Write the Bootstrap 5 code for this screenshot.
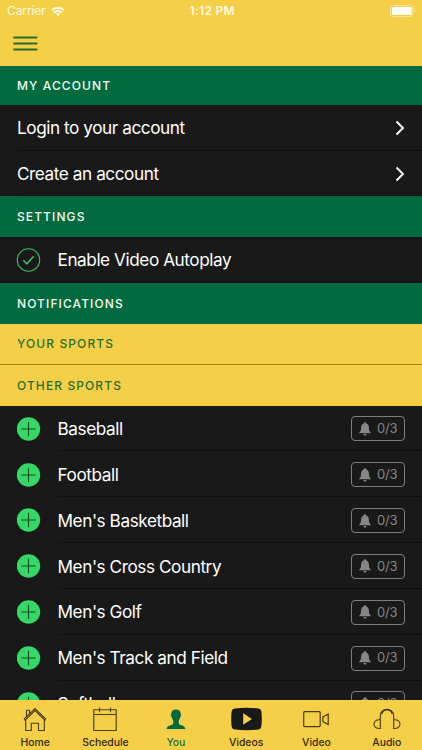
<!DOCTYPE html>
<html lang="en">
<head>
<meta charset="utf-8">
<meta name="viewport" content="width=device-width, initial-scale=1">
<title>You</title>
<link href="https://cdn.jsdelivr.net/npm/bootstrap@5.3.0/dist/css/bootstrap.min.css" rel="stylesheet">
<style>
:root{--gold:#f5cf48;--green:#026a3e;--ink:#191919}
body{font-family:Inter,"Liberation Sans",sans-serif;background:var(--ink);color:#fff}
svg{display:block;flex:none;overflow:visible}
.screen{height:750px}
.top{height:65.5px;background:var(--gold)}
.status{height:22px;font-size:12px;line-height:22px;padding:0 6px 0 7px;color:#fff9e2}
.status .side{flex:1 1 0}
.carrier{letter-spacing:-.1px}
.clock{font-weight:600;letter-spacing:.3px;margin-left:1.5px}
.wifi{margin-left:5.500px}
.menu-btn{padding:14px 0 0 13px}
.sect{background:var(--green);font-size:12px;font-weight:500;letter-spacing:1.1px;padding:1px 17px 0;color:#effaf3}
.sect-gold{background:var(--gold);color:#27702c}
.h-a{height:39.5px}.h-b{height:40.5px}.h-c{height:41px}
.line-b{border-bottom:1px solid #9b8430}
.entry{font-size:17.2px;letter-spacing:-.44px;padding-left:17px}
.entry .body-part{border-bottom:1px solid #101010;padding:2px 17px 0 0}
.h-row{height:45.5px}.h-set{height:46px}.h-sport{height:45.85px}
.entry .mark-col{width:40.5px;padding-top:.6px}
.bell{width:54.5px;height:25px;border:1px solid #7d7d7d;border-radius:4px;color:#868686;font-size:13px;letter-spacing:-.2px;padding-left:7px;gap:6.5px}
.tabs{height:50px;background:var(--gold);z-index:2}
.tab{font-size:10.4px;font-weight:500;line-height:13px;letter-spacing:0;color:#302b13;padding-top:7px}
.tab svg{margin-bottom:4px}
.tab-on{color:#167239}
.list-area{min-height:0}
</style>
<script src="https://cdn.jsdelivr.net/npm/bootstrap@5.3.0/dist/js/bootstrap.bundle.min.js"></script>
</head>
<body>
<svg width="0" height="0" class="position-absolute" aria-hidden="true">
<symbol id="chev" viewBox="0 0 10 16"><path d="M1.500 1.500 8 8l-6.500 6.500" fill="none" stroke="#fff" stroke-width="1.900"/></symbol>
<symbol id="plus" viewBox="0 0 24 24"><circle cx="11.500" cy="12" r="11.700" fill="#35d866"/><path d="M11.500 4.800v14.400M4.300 12h14.400" stroke="#124d25" stroke-width="1.100"/></symbol>
<symbol id="bell" viewBox="0 0 12 14"><path d="M6 .2c.8 0 1.200.5 1.200 1.200C9 2 9.900 3.500 9.900 5.500c0 3 .7 4.100 1.900 5.200v.6H.2v-.6C1.400 9.600 2.100 8.500 2.100 5.500 2.100 3.500 3 2 4.800 1.400 4.800.7 5.200.2 6 .2ZM4.500 12h3c0 2.100-3 2.100-3 0Z" fill="currentColor"/></symbol>
</svg>
<div class="screen d-flex flex-column overflow-hidden">
  <header class="top flex-shrink-0">
    <div class="status d-flex align-items-center">
      <div class="side d-flex align-items-center"><span class="carrier">Carrier</span>
        <svg width="14" height="11" viewBox="0 0 15 11" class="wifi"><g fill="none" stroke="#fffdf2" stroke-width="2"><path d="M1 4.100a9.300 9.300 0 0 1 13 0M3.400 6.600a5.800 5.800 0 0 1 8.200 0"/></g><path d="M5.200 8.200a3.300 3.300 0 0 1 4.600 0L7.500 10.600Z" fill="#fffdf2"/></svg></div>
      <span class="clock">1:12 PM</span>
      <div class="side d-flex justify-content-end">
        <svg width="26" height="12" viewBox="0 0 26 12"><rect x=".5" y=".5" width="22.500" height="11" rx="3" fill="none" stroke="#fae6a0"/><rect x="2" y="2" width="19.700" height="8" rx="1.600" fill="#fff"/><path d="M24.300 4v4c1.700-.6 1.700-3.400 0-4Z" fill="#fae6a0"/></svg>
      </div>
    </div>
    <div class="menu-btn"><svg width="25" height="16" viewBox="0 0 25 16"><path d="M.3 1.500h24M.3 7.500h24M.3 13.500h24" stroke="#276e2d" stroke-width="1.900"/></svg></div>
  </header>
  <main class="list-area flex-grow-1 overflow-hidden d-flex flex-column">
    <div class="sect h-a d-flex align-items-center flex-shrink-0">MY ACCOUNT</div>
    <div class="entry h-row d-flex flex-shrink-0"><div class="body-part flex-grow-1 d-flex align-items-center justify-content-between"><span>Login to your account</span><svg width="10" height="16"><use href="#chev"/></svg></div></div>
    <div class="entry h-row d-flex flex-shrink-0"><div class="body-part flex-grow-1 d-flex align-items-center justify-content-between"><span>Create an account</span><svg width="10" height="16"><use href="#chev"/></svg></div></div>
    <div class="sect h-b d-flex align-items-center flex-shrink-0">SETTINGS</div>
    <div class="entry h-set d-flex align-items-center flex-shrink-0"><div class="mark-col"><svg width="24" height="24" viewBox="0 0 24 24" fill="none" stroke="#35c85f"><circle cx="11.500" cy="12" r="11.200" stroke-width="1.100"/><path d="m6.300 12.200 3.500 3.600 6.900-7.500" stroke-width="1.500"/></svg></div><span>Enable Video Autoplay</span></div>
    <div class="sect h-c d-flex align-items-center flex-shrink-0">NOTIFICATIONS</div>
    <div class="sect sect-gold h-c line-b d-flex align-items-center flex-shrink-0">YOUR SPORTS</div>
    <div class="sect sect-gold h-c d-flex align-items-center flex-shrink-0">OTHER SPORTS</div>
    <div class="entry h-sport d-flex flex-shrink-0"><div class="mark-col d-flex align-items-center"><svg width="24" height="24"><use href="#plus"/></svg></div><div class="body-part flex-grow-1 d-flex align-items-center justify-content-between"><span>Baseball</span><div class="bell d-flex align-items-center"><svg width="12" height="14"><use href="#bell"/></svg><span>0/3</span></div></div></div>
    <div class="entry h-sport d-flex flex-shrink-0"><div class="mark-col d-flex align-items-center"><svg width="24" height="24"><use href="#plus"/></svg></div><div class="body-part flex-grow-1 d-flex align-items-center justify-content-between"><span>Football</span><div class="bell d-flex align-items-center"><svg width="12" height="14"><use href="#bell"/></svg><span>0/3</span></div></div></div>
    <div class="entry h-sport d-flex flex-shrink-0"><div class="mark-col d-flex align-items-center"><svg width="24" height="24"><use href="#plus"/></svg></div><div class="body-part flex-grow-1 d-flex align-items-center justify-content-between"><span>Men's Basketball</span><div class="bell d-flex align-items-center"><svg width="12" height="14"><use href="#bell"/></svg><span>0/3</span></div></div></div>
    <div class="entry h-sport d-flex flex-shrink-0"><div class="mark-col d-flex align-items-center"><svg width="24" height="24"><use href="#plus"/></svg></div><div class="body-part flex-grow-1 d-flex align-items-center justify-content-between"><span>Men's Cross Country</span><div class="bell d-flex align-items-center"><svg width="12" height="14"><use href="#bell"/></svg><span>0/3</span></div></div></div>
    <div class="entry h-sport d-flex flex-shrink-0"><div class="mark-col d-flex align-items-center"><svg width="24" height="24"><use href="#plus"/></svg></div><div class="body-part flex-grow-1 d-flex align-items-center justify-content-between"><span>Men's Golf</span><div class="bell d-flex align-items-center"><svg width="12" height="14"><use href="#bell"/></svg><span>0/3</span></div></div></div>
    <div class="entry h-sport d-flex flex-shrink-0"><div class="mark-col d-flex align-items-center"><svg width="24" height="24"><use href="#plus"/></svg></div><div class="body-part flex-grow-1 d-flex align-items-center justify-content-between"><span>Men's Track and Field</span><div class="bell d-flex align-items-center"><svg width="12" height="14"><use href="#bell"/></svg><span>0/3</span></div></div></div>
    <div class="entry h-sport d-flex flex-shrink-0"><div class="mark-col d-flex align-items-center"><svg width="24" height="24"><use href="#plus"/></svg></div><div class="body-part flex-grow-1 d-flex align-items-center justify-content-between"><span>Softball</span><div class="bell d-flex align-items-center"><svg width="12" height="14"><use href="#bell"/></svg><span>0/3</span></div></div></div>
  </main>
  <nav class="tabs row row-cols-6 g-0 flex-shrink-0">
    <div class="col tab d-flex flex-column align-items-center"><svg width="24" height="25" viewBox="0 0 24 25" fill="none" stroke="#463c17" stroke-width="1.100"><path d="M1 12.200 12 1.500l11 10.700M1 12.200l1.100 1L12 3.600l9.900 9.600 1.100-1M3.500 9.500V3.200h3v3.500M2.700 12.800v10.700h5.600v-7.300h7.200v7.300h5.800V12.800"/></svg>Home</div>
    <div class="col tab d-flex flex-column align-items-center"><svg width="24" height="25" viewBox="0 0 24 25" fill="none" stroke="#463c17" stroke-width="1.100"><path d="M.8 2.700h22.400v20.800H.8zM.8 7.500h22.400M6.500.5v4.800M17.500.5v4.800"/></svg>Schedule</div>
    <div class="col tab tab-on d-flex flex-column align-items-center"><svg width="20" height="25" viewBox="0 0 20 25"><path d="M10 2.500c3.300 0 4.900 2 4.700 4.800.8.500.5 2.200-.4 2.600-.3 1.600-1 2.600-1.500 3.200v3.300c.2 2.200 6.400 1.300 6.600 5.600H.6c.2-4.300 6.400-3.400 6.600-5.600v-3.300c-.5-.6-1.200-1.600-1.500-3.200-.9-.4-1.200-2.100-.4-2.600C5.100 4.500 6.700 2.500 10 2.500Z" fill="#026a3e"/></svg>You</div>
    <div class="col tab d-flex flex-column align-items-center"><svg width="31" height="25" viewBox="0 0 31 25"><path d="M4 1.500q11.500-1.400 23 0 3 .3 3.400 3.300.8 7.200 0 14.400-.4 3-3.400 3.300-11.500 1.400-23 0-3-.3-3.400-3.300-.8-7.200 0-14.400Q1 1.800 4 1.500Z" fill="#171a18"/><path d="m12.200 6.200 8.800 5.800-8.800 5.800Z" fill="#f5cf48"/></svg>Videos</div>
    <div class="col tab d-flex flex-column align-items-center"><svg width="26" height="25" viewBox="0 0 26 25" fill="none" stroke="#463c17" stroke-width="1.200"><rect x=".7" y="4.600" width="16.500" height="15" rx="1"/><path d="M25.200 7v10.500l-5.300-2.900V9.900Z"/></svg>Video</div>
    <div class="col tab d-flex flex-column align-items-center"><svg width="28" height="25" viewBox="0 0 28 25" fill="none" stroke="#463c17" stroke-width="1.100"><path d="M7.300 12.500V9C7.300.1 20.700.1 20.700 9v3.500M9 7c.8-5.300 9.200-5.300 10 0M7.300 12.800v8.700c-8.400.9-8.400-9.600 0-8.700Zm13.400 0v8.700c8.400.9 8.400-9.600 0-8.700Z"/></svg>Audio</div>
  </nav>
</div>
</body>
</html>
